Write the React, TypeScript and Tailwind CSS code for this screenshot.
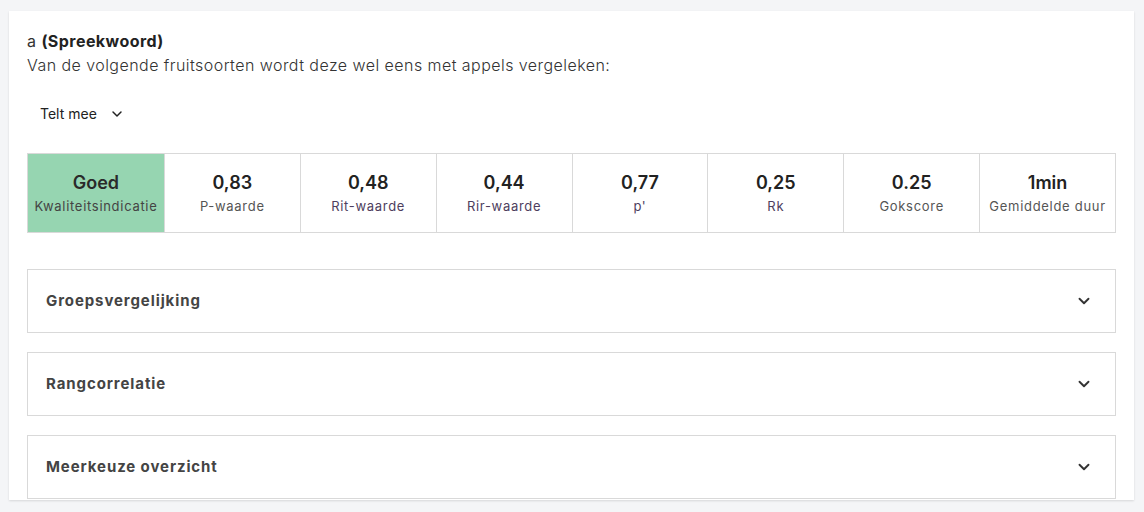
import { ChevronDown } from 'lucide-react'

const stats = [
  { value: '0,83', label: 'P-waarde', link: false },
  { value: '0,48', label: 'Rit-waarde', link: true },
  { value: '0,44', label: 'Rir-waarde', link: true },
  { value: '0,77', label: "p'", link: true },
  { value: '0,25', label: 'Rk', link: true },
  { value: '0.25', label: 'Gokscore', link: false },
  { value: '1min', label: 'Gemiddelde duur', link: false },
]

const sections = ['Groepsvergelijking', 'Rangcorrelatie', 'Meerkeuze overzicht']

export default function App() {
  return (
    <div className="h-[512px] overflow-hidden bg-[#f4f5f7] pt-[11px] pl-[9px] pr-[10px] font-['Inter',sans-serif] text-[#333]">
      <div className="h-[489px] overflow-hidden bg-white px-[18px] pt-[18px] shadow-[0_1px_2px_rgba(0,0,0,0.12)]">
        {/* Question */}
        <p className="text-[16px] leading-[24px] tracking-[0.45px] text-[#333]">
          a <span className="font-bold text-[#222]">(Spreekwoord)</span>
        </p>
        <p className="text-[16px] leading-[24px] tracking-[0.45px] font-light text-[#333]">
          Van de volgende fruitsoorten wordt deze wel eens met appels vergeleken:
        </p>

        {/* Dropdown */}
        <button className="mt-[26px] ml-[13px] flex items-center gap-[12px] text-[14px] text-[#222]">
          Telt mee
          <ChevronDown className="h-4 w-4" strokeWidth={2.2} />
        </button>

        {/* Stats */}
        <div className="mt-[29px] grid h-[80px] grid-cols-8 border border-[#d9d9d9]">
          <div className="flex flex-col items-center justify-center bg-[#96d5b1]">
            <span className="text-[18px] font-semibold leading-[24px] text-[#2a2a2a]">Goed</span>
            <span className="mt-[2px] text-[13px] leading-[18px] tracking-[0.7px] text-[#444]">Kwaliteitsindicatie</span>
          </div>
          {stats.map(s => (
            <div key={s.label} className="flex flex-col items-center justify-center border-l border-[#d9d9d9]">
              <span className="text-[18px] font-semibold leading-[24px] text-[#222]">{s.value}</span>
              <span
                className={`mt-[2px] text-[13px] leading-[18px] tracking-[0.7px] ${s.link ? 'text-[#4e3e5e]' : 'text-[#555]'}`}
              >
                {s.label}
              </span>
            </div>
          ))}
        </div>

        {/* Accordions */}
        <div className="mt-[36px] flex flex-col gap-[19px]">
          {sections.map(title => (
            <div
              key={title}
              className="flex h-[64px] shrink-0 items-center justify-between border border-[#d9d9d9] pl-[18px] pr-[22px]"
            >
              <span className="text-[15px] font-bold tracking-[0.9px] text-[#444]">{title}</span>
              <ChevronDown className="h-[18px] w-[18px] text-[#333]" strokeWidth={2.5} />
            </div>
          ))}
        </div>
      </div>
    </div>
  )
}
